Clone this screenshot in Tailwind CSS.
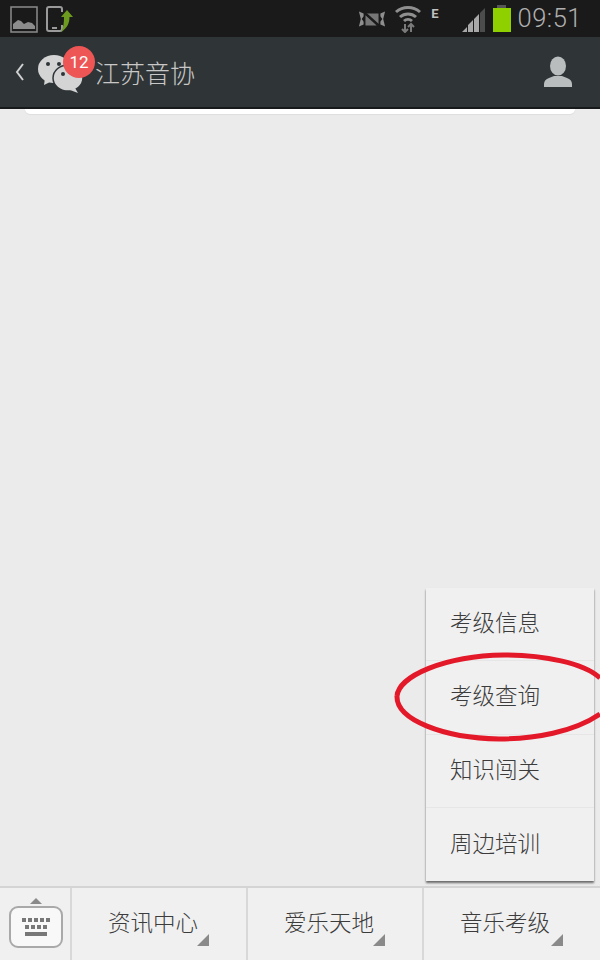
<!doctype html>
<html lang="zh">
<head>
<meta charset="utf-8">
<title>江苏音协</title>
<script src="https://cdn.jsdelivr.net/npm/@tailwindcss/browser@4"></script>
</head>
<body class="font-['Noto_Sans_CJK_SC','Noto_Sans',sans-serif]">
<div class="relative flex h-[960px] w-[600px] flex-col overflow-hidden bg-[#ebebeb]">

  <!-- Status bar -->
  <div class="flex h-[37px] shrink-0 items-center justify-between bg-[#1a1a1a] pl-[10px] pr-[18px]">
    <div class="flex items-center gap-[8px]">
      <svg class="h-[28px] w-[28px]" viewBox="0 0 28 28" fill="none">
        <rect x="1" y="2" width="26" height="25" stroke="#8c8c8c" stroke-width="1.5"/>
        <path d="M3 24v-5l5-4 3 1 3 3 4-2 4 1 3 3v3z" fill="#8c8c8c"/>
      </svg>
      <svg class="h-[28px] w-[30px]" viewBox="0 0 30 28" fill="none">
        <path d="M16 20v4a2 2 0 0 1-2 2H3a2 2 0 0 1-2-2V4a2 2 0 0 1 2-2h11a2 2 0 0 1 2 2v3" stroke="#9a9a9a" stroke-width="2"/>
        <rect x="6" y="22" width="5" height="2" fill="#9a9a9a"/>
        <path d="M21 5l6 7h-3.500c0 6-2 11-8.500 15 2.500-4 3-9 3-15h-3z" fill="#6d9b1f"/>
      </svg>
    </div>
    <div class="flex items-center">
      <svg class="mr-[9px] h-[24px] w-[28px]" viewBox="0 0 30 24" fill="#8f8f8f">
        <path d="M1 4l5 2v3l-2 3 2 3v3l-5 2 2-8zM29 4l-5 2v3l2 3-2 3v3l5 2-2-8z"/>
        <path d="M8 6l14 13V6zM8 8v11h12z" fill-opacity=".8"/>
        <path d="M5 3l20 18" stroke="#1a1a1a" stroke-width="2"/>
      </svg>
      <svg class="mr-[10px] h-[28px] w-[26px]" viewBox="0 0 26 28" fill="none">
        <path d="M1 7a18 18 0 0 1 24 0M5 12a12 12 0 0 1 16 0M9 16a6 6 0 0 1 8 0" stroke="#8f8f8f" stroke-width="3"/>
        <path d="M10 19v8M7 24l3 3 3-3M16 27v-8M13 22l3-3 3 3" stroke="#7a7a7a" stroke-width="2"/>
      </svg>
      <span class="mb-[11px] mr-[22px] font-['Roboto',sans-serif] text-[13px] font-bold leading-none text-[#c0c0c0]">E</span>
      <svg class="mr-[7px] h-[26px] w-[25px]" viewBox="0 0 25 26">
        <path d="M1 26l5-5v5zM7 26v-7l5-5v12zM13 26v-13l5-5v18z" fill="#a8a8a8"/>
        <path d="M19 26v-19l5-5v24z" fill="#4c4c4c"/>
      </svg>
      <div class="mr-[7px] flex flex-col items-center">
        <div class="h-[3px] w-[9px] bg-[#555]"></div>
        <div class="h-[24px] w-[18px] bg-[#8fd000]"></div>
      </div>
      <span class="font-['Roboto',sans-serif] text-[25.500px] font-light leading-none tracking-[0.5px] text-[#b0b0b0]">09:51</span>
    </div>
  </div>

  <!-- Title bar -->
  <div class="flex h-[72px] shrink-0 items-center border-b-[2px] border-[#17191a] bg-[#2f3537] pr-[26px]">
    <svg class="ml-[14px] h-[20px] w-[11px]" viewBox="0 0 11 20" fill="none">
      <path d="M9 2L3 10l6 8" stroke="#d0d0d0" stroke-width="2"/>
    </svg>
    <div class="relative ml-[13px] h-[50px] w-[46px]">
      <svg class="absolute left-0 top-[6px] h-[40px] w-[46px]" viewBox="0 0 46 40">
        <ellipse cx="16" cy="16" rx="16" ry="14" fill="#d4d4d4"/>
        <path d="M7 25l-1 7 8-4z" fill="#d4d4d4"/>
        <circle cx="10" cy="11" r="2" fill="#2f3537"/>
        <circle cx="21" cy="11" r="2" fill="#2f3537"/>
        <ellipse cx="30" cy="25" rx="15" ry="13" fill="#d4d4d4" stroke="#2f3537" stroke-width="1.500"/>
        <path d="M37 35l3 5-8-3z" fill="#d4d4d4"/>
        <circle cx="25" cy="21" r="2" fill="#2f3537"/>
        <circle cx="35" cy="21" r="2" fill="#2f3537"/>
      </svg>
      <span class="absolute left-[25px] top-[-1px] flex h-[32px] w-[32px] items-center justify-center rounded-full bg-[#ee5555] font-['Roboto',sans-serif] text-[17px] leading-none text-white">12</span>
    </div>
    <span class="ml-[11px] text-[25px] font-light leading-none text-[#c8c8c8]">江苏音协</span>
    <svg class="ml-auto mr-[1px] h-[32px] w-[30px]" viewBox="0 0 30 32" fill="#b9bdbd">
      <ellipse cx="15" cy="10" rx="8" ry="9.500"/>
      <path d="M1 31v-3c0-3 2-5 5-6l5-2h8l5 2c3 1 5 3 5 6v3z"/>
    </svg>
  </div>

  <!-- Message area -->
  <div class="relative flex-1">
    <div class="mx-[25px] h-[5px] rounded-b-[6px] bg-white shadow-[0_1px_1px_rgba(0,0,0,0.06)]"></div>

    <!-- Popup menu -->
    <ul class="absolute bottom-[5px] right-[6px] w-[168px] bg-[#f0f0f0] text-[22.500px] font-light leading-none text-[#3c3c3c] shadow-[0_2px_2px_rgba(0,0,0,0.55)]">
      <li class="flex h-[73px] items-center border-b border-[#e6e6e6] pb-[6px] pl-[24px]">考级信息</li>
      <li class="flex h-[74px] items-center border-b border-[#e6e6e6] pb-[6px] pl-[24px]">考级查询</li>
      <li class="flex h-[73px] items-center border-b border-[#e6e6e6] pb-[5px] pl-[24px]">知识闯关</li>
      <li class="flex h-[73px] items-center pb-[5px] pl-[24px]">周边培训</li>
    </ul>

    <!-- Red hand-drawn ring -->
    <svg class="absolute bottom-[144px] left-[394px] h-[90px] w-[206px] overflow-hidden" viewBox="0 0 206 90" fill="none">
      <path d="M3 44C5 24 50 4 110 3c40 0 80 8 96 23M206 62C180 80 140 87 105 87 50 86 2 68 3 44" stroke="#e3192a" stroke-width="5"/>
    </svg>
  </div>

  <!-- Bottom menu -->
  <div class="flex h-[74px] shrink-0 border-t-[2px] border-[#d4d4d4] bg-[#f0f0f0] text-[22.500px] font-light leading-none text-[#3c3c3c]">
    <div class="flex w-[72px] shrink-0 flex-col items-center border-r-[2px] border-[#d8d8d8] pl-[2px] pt-[10px]">
      <div class="h-0 w-0 border-x-[6px] border-b-[6px] border-x-transparent border-b-[#8a8a8a]"></div>
      <div class="mt-[2px] flex h-[42px] w-[54px] flex-col items-center justify-center gap-[3px] rounded-[9px] border-[2px] border-[#a9a9a9] bg-[#f8f8f8]">
        <div class="flex gap-[2px]">
          <i class="h-[4px] w-[4px] bg-[#777]"></i><i class="h-[4px] w-[4px] bg-[#777]"></i><i class="h-[4px] w-[4px] bg-[#777]"></i><i class="h-[4px] w-[4px] bg-[#777]"></i><i class="h-[4px] w-[4px] bg-[#777]"></i>
        </div>
        <div class="flex gap-[2px]">
          <i class="h-[4px] w-[4px] bg-[#777]"></i><i class="h-[4px] w-[4px] bg-[#777]"></i><i class="h-[4px] w-[4px] bg-[#777]"></i><i class="h-[4px] w-[4px] bg-[#777]"></i>
        </div>
        <div class="h-[4px] w-[22px] bg-[#777]"></div>
      </div>
    </div>
    <div class="relative flex w-[176px] shrink-0 items-center justify-center border-r-[2px] border-[#d8d8d8] pb-[5px] pr-[12px]">
      资讯中心
      <svg class="absolute bottom-[14px] right-[37px] h-[12px] w-[12px]" viewBox="0 0 12 12"><path d="M12 0v12H0z" fill="#8a8a8a"/></svg>
    </div>
    <div class="relative flex w-[176px] shrink-0 items-center justify-center border-r-[2px] border-[#d8d8d8] pb-[5px] pr-[12px]">
      爱乐天地
      <svg class="absolute bottom-[14px] right-[37px] h-[12px] w-[12px]" viewBox="0 0 12 12"><path d="M12 0v12H0z" fill="#8a8a8a"/></svg>
    </div>
    <div class="relative flex flex-1 items-center justify-center pb-[5px] pr-[14px]">
      音乐考级
      <svg class="absolute bottom-[14px] right-[37px] h-[12px] w-[12px]" viewBox="0 0 12 12"><path d="M12 0v12H0z" fill="#8a8a8a"/></svg>
    </div>
  </div>
</div>
</body>
</html>
